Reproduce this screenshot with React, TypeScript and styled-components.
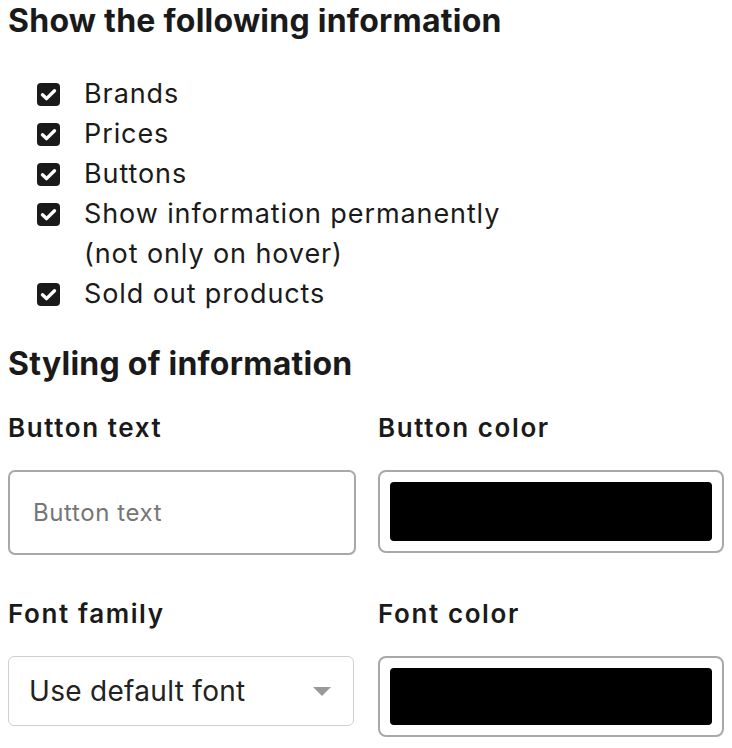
import React from "react";
import styled, { createGlobalStyle } from "styled-components";

const GlobalStyle = createGlobalStyle`
    body {
        margin: 8px;
        background: #fff;
        color: #1a1a1a;
        font-family: Inter, "Liberation Sans", sans-serif;
    }
`;

const options = [
    "Brands",
    "Prices",
    "Buttons",
    "Show information permanently\n(not only on hover)",
    "Sold out products",
];

const CheckIcon = () => (
    <svg width="23" height="23" viewBox="0 0 23 23">
        <rect x="0" y="0" width="23" height="23" rx="4" fill="#1a1a1a" />
        <path d="M5.5 11.8 L9.5 15.6 L17.5 7.8" stroke="#fff" strokeWidth="3.4" fill="none" strokeLinecap="round" strokeLinejoin="round" />
    </svg>
);

export default function App() {
    return (
        <>
            <GlobalStyle />
            <Page>
                <Heading>Show the following information</Heading>
                <OptionList>
                    {options.map((label) => (
                        <Option key={label}>
                            <Box><CheckIcon /></Box>
                            <OptionLabel>{label}</OptionLabel>
                        </Option>
                    ))}
                </OptionList>
                <Heading $top={37}>Styling of information</Heading>
                <Fields>
                    <Field>
                        <Label>Button text</Label>
                        <TextInput placeholder="Button text" />
                    </Field>
                    <Field>
                        <Label>Button color</Label>
                        <Swatch $height={83}><SwatchFill /></Swatch>
                    </Field>
                    <Field>
                        <Label>Font family</Label>
                        <Select>
                            <span>Use default font</span>
                            <Caret />
                        </Select>
                    </Field>
                    <Field>
                        <Label>Font color</Label>
                        <Swatch $height={81}><SwatchFill /></Swatch>
                    </Field>
                </Fields>
            </Page>
        </>
    );
}

// STYLES
const Page = styled.div`
    width: 716px;
`;

const Heading = styled.h2<{ $top?: number }>`
    margin: ${(p) => p.$top ?? 0}px 0 0;
    font-size: 32px;
    font-weight: 700;
    line-height: 26px;
    letter-spacing: 0.25px;
`;

const OptionList = styled.ul`
    list-style: none;
    margin: 40px 0 0;
    padding: 0 0 0 29px;
`;

const Option = styled.li`
    display: flex;
    align-items: flex-start;
    gap: 24px;
`;

const Box = styled.span`
    display: flex;
    padding-top: 9px;
    flex: none;
`;

const OptionLabel = styled.span`
    font-size: 27px;
    line-height: 40px;
    letter-spacing: 0.9px;
    white-space: pre-line;
    color: #1a1a1a;
`;

const Fields = styled.div`
    display: grid;
    grid-template-columns: 348px 346px;
    column-gap: 22px;
    row-gap: 41px;
    margin-top: 33px;
    align-items: start;
`;

const Field = styled.div`
    display: flex;
    flex-direction: column;
`;

const Label = styled.div`
    font-size: 26px;
    font-weight: 600;
    line-height: 36px;
    letter-spacing: 1.6px;
    margin-bottom: 24px;
`;

const TextInput = styled.input`
    box-sizing: border-box;
    height: 85px;
    width: 100%;
    border: 2px solid #a8a8a8;
    border-radius: 7px;
    padding: 0 0 0 23px;
    font-family: Inter, "Liberation Sans", sans-serif;
    font-size: 24px;
    letter-spacing: 0.6px;
    outline: none;

    &::placeholder {
        color: #767676;
    }
`;

const Swatch = styled.div<{ $height: number }>`
    box-sizing: border-box;
    height: ${(p) => p.$height}px;
    border: 2px solid #a8a8a8;
    border-radius: 8px;
    padding: 10px;
    display: flex;
`;

const SwatchFill = styled.div`
    flex: 1;
    background: #000;
    border-radius: 4px;
`;

const Select = styled.div`
    box-sizing: border-box;
    height: 70px;
    width: 346px;
    border: 1.5px solid #cfcfcf;
    border-radius: 6px;
    padding: 0 22px 0 20px;
    display: flex;
    align-items: center;
    justify-content: space-between;
    font-size: 28px;
    letter-spacing: 0.3px;
    color: #222;
`;

const Caret = styled.span`
    width: 0;
    height: 0;
    border-left: 9px solid transparent;
    border-right: 9px solid transparent;
    border-top: 9px solid #999;
`;
